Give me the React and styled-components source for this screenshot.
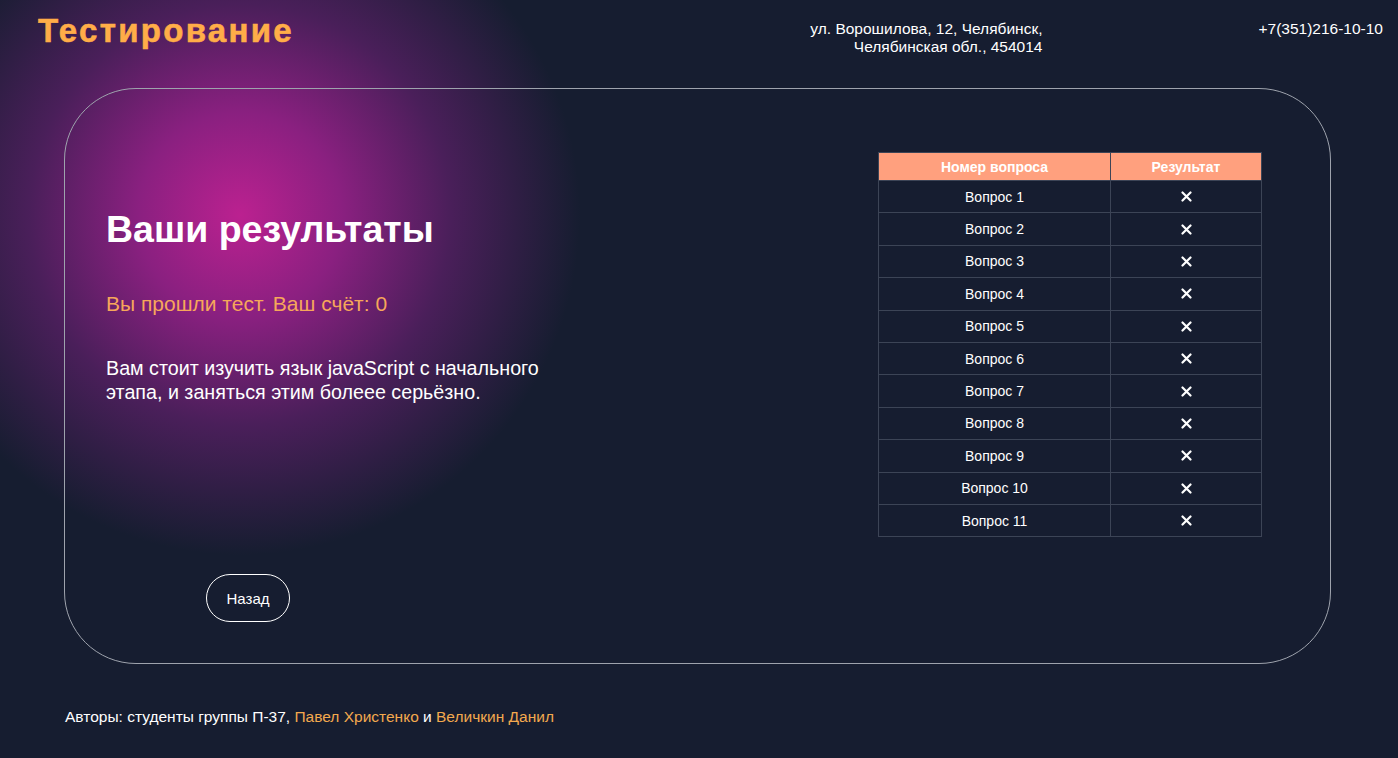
import styled, { createGlobalStyle } from 'styled-components'

const GlobalStyle = createGlobalStyle`
    html, body {
        margin: 0;
        padding: 0;
    }
    body {
        min-height: 758px;
        font-family: "Liberation Sans", Arial, sans-serif;
        color: #ffffff;
        background-color: #161d30;
        background-image: radial-gradient(circle 340px at 240px 215px, #bb2190 0%, #8a2080 30%, #4a1f5a 62%, rgba(22, 29, 48, 0) 100%);
        background-repeat: no-repeat;
    }
`

const questions = Array.from({ length: 11 }, (_, i) => ({ n: i + 1, ok: false }))

const Cross = () => (
    <svg width="11" height="11" viewBox="0 0 11 11">
        <path d="M1.5 1.5 L9.5 9.5 M9.5 1.5 L1.5 9.5" stroke="#fff" strokeWidth="2.2" strokeLinecap="round" />
    </svg>
)

export default function App() {
    return (
        <Page>
            <GlobalStyle />
            <Header>
                <Logo>Тестирование</Logo>
                <Address>
                    ул. Ворошилова, 12, Челябинск,<br />
                    Челябинская обл., 454014
                </Address>
                <Phone>+7(351)216-10-10</Phone>
            </Header>

            <Card>
                <Info>
                    <Title>Ваши результаты</Title>
                    <Score>Вы прошли тест. Ваш счёт: 0</Score>
                    <Advice>
                        Вам стоит изучить язык javaScript с начального этапа, и заняться этим болеее серьёзно.
                    </Advice>
                    <BackButton>Назад</BackButton>
                </Info>

                <Table>
                    <thead>
                        <tr>
                            <Th>Номер вопроса</Th>
                            <Th>Результат</Th>
                        </tr>
                    </thead>
                    <tbody>
                        {questions.map(q => (
                            <Row key={q.n}>
                                <Td>Вопрос {q.n}</Td>
                                <Td><Cross /></Td>
                            </Row>
                        ))}
                    </tbody>
                </Table>
            </Card>

            <Footer>
                Авторы: студенты группы П-37, <Name>Павел Христенко</Name> и <Name>Величкин Данил</Name>
            </Footer>
        </Page>
    )
}

const Page = styled.div`
    width: 1398px;
`

const Header = styled.header`
    display: flex;
    align-items: flex-start;
    padding: 12px 15px 0 38px;
    height: 76px;
    box-sizing: border-box;
`

const Logo = styled.h1`
    margin: 0;
    font-size: 33px;
    font-weight: 700;
    letter-spacing: 2.3px;
    -webkit-text-stroke: 0.6px #ffad48;
    color: #ffad48;
`

const Address = styled.div`
    margin: 8px 0 0 auto;
    font-size: 15.5px;
    line-height: 18px;
    text-align: right;
`

const Phone = styled.div`
    margin: 8px 0 0 216px;
    font-size: 15.5px;
    line-height: 18px;
`

const Card = styled.main`
    display: grid;
    grid-template-columns: 1fr 384px;
    align-items: start;
    margin: 12px 0 0 64px;
    width: 1267px;
    height: 576px;
    box-sizing: border-box;
    padding: 63px 68px 40px 41px;
    border: 1px solid #9ea3ad;
    border-radius: 72px;
`

const Info = styled.section`
    display: flex;
    flex-direction: column;
    align-items: flex-start;
    padding-top: 57px;
`

const Title = styled.h2`
    margin: 0;
    font-size: 37.5px;
    font-weight: 700;
    line-height: 41px;
`

const Score = styled.p`
    margin: 42px 0 0;
    font-size: 21px;
    line-height: 23px;
    color: #f6a75a;
`

const Advice = styled.p`
    margin: 41px 0 0;
    max-width: 450px;
    font-size: 19.7px;
    line-height: 24px;
`

const BackButton = styled.button`
    margin: 170px 0 0 100px;
    width: 84px;
    height: 48px;
    border: 1px solid #ffffff;
    border-radius: 24px;
    background: transparent;
    color: #ffffff;
    font-family: "Liberation Sans", Arial, sans-serif;
    font-size: 15px;
    cursor: pointer;
`

const Table = styled.table`
    width: 384px;
    border-collapse: collapse;
    font-size: 14px;
`

const Th = styled.th`
    height: 27px;
    padding: 0;
    background: #ffa07e;
    color: #ffffff;
    font-weight: 700;
    border: 1px solid #3c4456;
    &:first-child { width: 231px; }
`

const Row = styled.tr`
    height: 32.4px;
`

const Td = styled.td`
    padding: 0;
    text-align: center;
    vertical-align: middle;
    border: 1px solid #3c4456;
    svg { display: block; margin: 0 auto; }
`

const Footer = styled.footer`
    padding: 44px 0 0 65px;
    font-size: 15.5px;
`

const Name = styled.span`
    color: #f3a94e;
`
